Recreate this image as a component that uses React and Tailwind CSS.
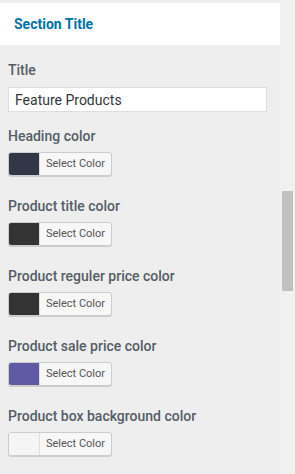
import React from 'react';

const colorFields = [
  { label: 'Heading color', swatch: 'bg-[#333647]' },
  { label: 'Product title color', swatch: 'bg-[#333333]' },
  { label: 'Product reguler price color', swatch: 'bg-[#333333]' },
  { label: 'Product sale price color', swatch: 'bg-[#5f5aa2]' },
  { label: 'Product box background color', swatch: 'bg-[#f5f5f5]' },
];

function ColorButton({ swatch }) {
  return (
    <div className="flex h-[24px] w-[104px] overflow-hidden rounded-[3px] border border-[#cccccc] bg-[#f7f7f7] shadow-[0_1px_0_#cccccc]">
      <span className={`w-[31px] border-r border-[#dddddd] ${swatch}`} />
      <span className="flex flex-1 items-center justify-center text-[11px] text-[#555555]">
        Select Color
      </span>
    </div>
  );
}

export default function App() {
  return (
    <div className="flex h-[474px] w-[295px] overflow-hidden bg-[#eeeeee] font-['Roboto',sans-serif]">
      <div className="w-[280px] pt-[3px]">
        <div className="flex h-[42px] items-center bg-white px-[14px]">
          <h3 className="text-[14px] font-bold text-[#0073aa]">Section Title</h3>
        </div>

        <div className="px-[8px] pt-[15px]">
          <label className="block text-[14px] font-medium text-[#555d66]">Title</label>
          <input
            type="text"
            defaultValue="Feature Products"
            className="mt-[6px] h-[25px] w-[259px] border border-[#dddddd] bg-white px-[6px] text-[14px] text-[#32373c] outline-none"
          />

          <div className="mt-[14px] flex flex-col gap-[20px]">
            {colorFields.map((field) => (
              <div key={field.label}>
                <label className="block whitespace-nowrap text-[14px] font-medium text-[#555d66]">
                  {field.label}
                </label>
                <div className="mt-[5px]">
                  <ColorButton swatch={field.swatch} />
                </div>
              </div>
            ))}
          </div>
        </div>
      </div>

      <div className="relative w-[15px] bg-[#f1f1f1]">
        <div className="absolute left-[2px] top-[191px] h-[100px] w-[11px] bg-[#c1c1c1]" />
      </div>
    </div>
  );
}
